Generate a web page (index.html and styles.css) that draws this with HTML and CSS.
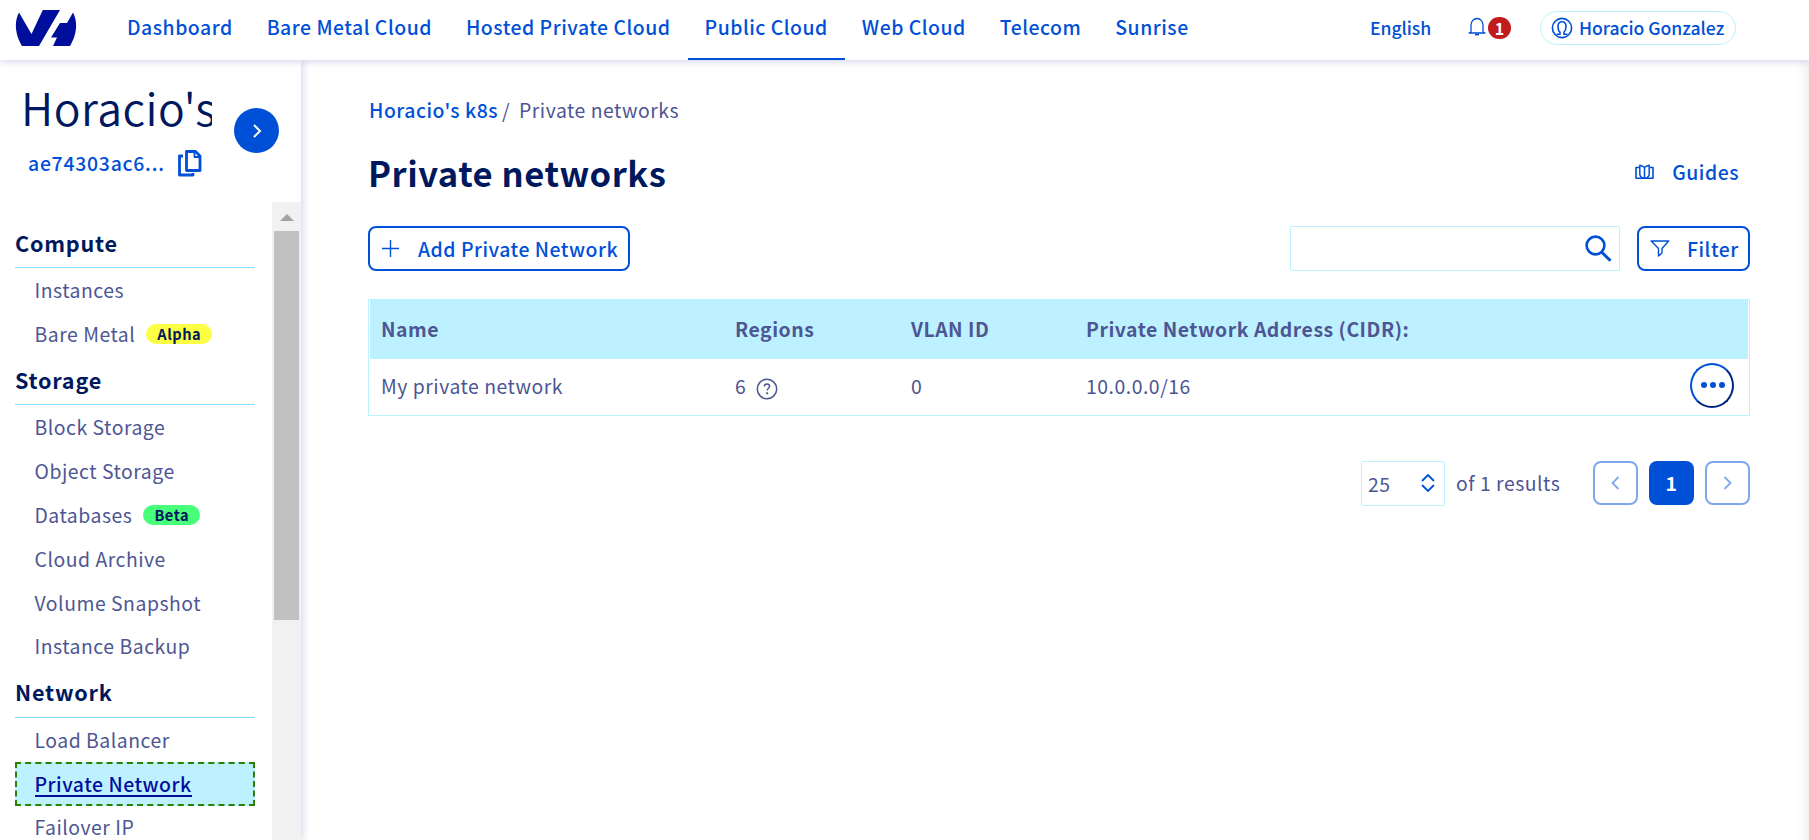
FILE: index.html
```html
<!DOCTYPE html>
<html lang="en">
<head>
<meta charset="utf-8">
<title>Private networks</title>
<link rel="stylesheet" href="styles.css">
</head>
<body>
<header class="topbar">
  <svg class="logo" viewBox="0 0 62 36"><path d="M4 2.5 16.5 24 27.8 0H45L24 36H7C1.500 27 -2 14 4 2.500ZM58 2.500C64 14 60.500 27 55 36H38L42 27.500H36L45 13H52Z" fill="#000e9c"/></svg>
  <nav class="nav">
    <a class="nav-item">Dashboard</a>
    <a class="nav-item">Bare Metal Cloud</a>
    <a class="nav-item">Hosted Private Cloud</a>
    <a class="nav-item active">Public Cloud</a>
    <a class="nav-item">Web Cloud</a>
    <a class="nav-item">Telecom</a>
    <a class="nav-item">Sunrise</a>
  </nav>
  <div class="account">
    <span class="lang">English</span>
    <span class="notif">
      <svg width="18" height="20" viewBox="0 0 18 20" fill="none" stroke="#0050d7" stroke-width="1.300"><path d="M3 15V8a6 6.500 0 0 1 12 0v7l2 1H1z" stroke-linejoin="round"/><path d="M7 17.500h4" stroke-width="1.800"/></svg>
      <b class="count">1</b>
    </span>
    <span class="user">
      <svg width="22" height="22" viewBox="0 0 22 22" fill="none" stroke="#0050d7" stroke-width="1.600"><circle cx="11" cy="11" r="9.600"/><path d="M5.500 17.300H9v-2.200C7.600 14 7 12 7 9.500 7 6.500 8.500 4.800 11 4.800s4 1.700 4 4.700c0 2.500-.6 4.500-2 5.600v2.200h3.500"/></svg>
      <span class="user-name">Horacio Gonzalez</span>
    </span>
  </div>
</header>
<div class="layout">
  <aside class="sidebar">
    <div class="project">
      <div class="project-info">
        <div class="project-name">Horacio's</div>
        <div class="project-id"><span>ae74303ac6...</span>
          <svg width="24" height="27" viewBox="0 0 24 27" fill="none" stroke="#0050d7" stroke-width="2.800" stroke-linejoin="round"><path d="M8.500 1.500h9L22 6v14.500H8.500z"/><path d="M16.500 2v5H22" stroke-width="1.800"/><path d="M5 6H1.500v19H15v-2"/></svg>
        </div>
      </div>
      <span class="switch"><svg width="10" height="14" viewBox="0 0 10 14" fill="none" stroke="#fff" stroke-width="2"><path d="M2 1l6 6-6 6"/></svg></span>
    </div>
    <div class="menu-area">
      <nav class="menu">
        <h2 class="group">Compute</h2>
        <a class="item">Instances</a>
        <a class="item">Bare Metal<b class="tag alpha">Alpha</b></a>
        <h2 class="group">Storage</h2>
        <a class="item">Block Storage</a>
        <a class="item">Object Storage</a>
        <a class="item">Databases<b class="tag beta">Beta</b></a>
        <a class="item">Cloud Archive</a>
        <a class="item">Volume Snapshot</a>
        <a class="item last">Instance Backup</a>
        <h2 class="group raised">Network</h2>
        <a class="item">Load Balancer</a>
        <a class="item current"><span class="current-text">Private Network</span></a>
        <a class="item last">Failover IP</a>
      </nav>
      <div class="track"><svg class="arrow" width="14" height="7" viewBox="0 0 14 7"><path d="M0 7 7 0l7 7z" fill="#a3a3a3"/></svg><div class="thumb"></div></div>
    </div>
  </aside>
  <main class="main">
    <div class="crumbs"><a class="crumb">Horacio's k8s</a><span class="slash">/</span><span class="here">Private networks</span></div>
    <div class="heading">
      <h1 class="title">Private networks</h1>
      <a class="guides"><svg width="19" height="16" viewBox="0 0 19 16" fill="none" stroke="#0050d7" stroke-width="1.600" stroke-linejoin="round"><path d="M4.500 3.500H1V14.300h17V3.500h-3.500"/><path d="M4.800 1.200C7 1.800 8 2.600 9.500 3.300 11 2.600 12 1.800 14.200 1.200V10.500c0 1.800-1.500 2.500-2.500 3.500h-4.400c-1-1-2.500-1.700-2.500-3.500zM9.500 3.500v10" stroke-width="1.500"/></svg><span>Guides</span></a>
    </div>
    <div class="tools">
      <a class="btn add"><svg width="17" height="17" viewBox="0 0 17 17" stroke="#0050d7" stroke-width="1.400"><path d="M8.500 0v17M0 8.500h17"/></svg><span>Add Private Network</span></a>
      <div class="search"><svg width="27" height="27" viewBox="0 0 27 27" fill="none" stroke="#0050d7" stroke-width="2.600"><circle cx="10.500" cy="10.500" r="8.900"/><path d="M16.500 17l9 8.800" stroke-width="3"/></svg></div>
      <a class="btn filter"><svg width="20" height="17" viewBox="0 0 20 17" fill="none" stroke="#0050d7" stroke-width="1.400" stroke-linejoin="round"><path d="M1.200 1h17.500L12 8.500V13l-3.500 3V8.500z"/></svg><span>Filter</span></a>
    </div>
    <div class="table">
      <div class="row head"><span>Name</span><span>Regions</span><span>VLAN ID</span><span>Private Network Address (CIDR):</span></div>
      <div class="row body"><span>My private network</span><span class="regions">6<svg width="22" height="22" viewBox="0 0 22 22" fill="none" stroke="#4d5693" stroke-width="1.500"><circle cx="11" cy="11" r="9.700"/><path d="M8.300 8.500c.1-1.700 1.200-2.500 2.700-2.500s2.600.9 2.600 2.300c0 1.900-2.400 2-2.400 4.200"/><path d="M11.200 14.300v2" stroke-width="1.900"/></svg></span><span>0</span><span>10.0.0.0/16</span>
        <span class="more"><i></i><i></i><i></i></span></div>
    </div>
    <div class="pager">
      <div class="size"><span>25</span><svg width="14" height="18" viewBox="0 0 14 18" fill="none" stroke="#0050d7" stroke-width="1.800"><path d="M1 7l6-6 6 6M1 11l6 6 6-6"/></svg></div>
      <span class="total">of 1 results</span>
      <span class="page off"><svg width="9" height="14" viewBox="0 0 9 14" fill="none" stroke="#80a7eb" stroke-width="1.800"><path d="M7.500 1l-6 6 6 6"/></svg></span>
      <span class="page on">1</span>
      <span class="page off"><svg width="9" height="14" viewBox="0 0 9 14" fill="none" stroke="#80a7eb" stroke-width="1.800"><path d="M1.500 1l6 6-6 6"/></svg></span>
    </div>
  </main>
</div>
</body>
</html>
```
FILE: styles.css
```css
* { box-sizing: border-box; }
body {
  margin: 0; width: 1809px; height: 840px; overflow: hidden; background: #fff;
  font-family: "Noto Sans CJK JP", "Open Sans", sans-serif;
  font-size: 19.4px; line-height: 28px; color: #4d5693; letter-spacing: .52px;
}
svg { display: block; flex: none; }
h1, h2 { margin: 0; }
.topbar {
  position: relative; z-index: 2; display: flex; height: 60px; background: #fff;
  box-shadow: 0 1px 8px rgba(0, 14, 156, .2);
}
.logo { width: 62px; height: 36px; margin: 10px 0 0 15px; }
.nav { display: flex; margin-left: 33px; }
.nav-item { padding: 13px 17px 0; font-weight: 500; color: #0050d7; white-space: nowrap; height: 60px; }
.nav-item.active { border-bottom: 2px solid #0050d7; }
.account { display: flex; margin-left: auto; margin-right: 73px; padding-top: 11px; color: #0050d7; font-weight: 500; font-size: 17.6px; letter-spacing: -.04px; line-height: 34px; }
.lang { width: 98px; line-height: 33px; }
.notif { display: flex; width: 72px; padding-top: 6px; }
.count { width: 23px; height: 22px; margin-left: 2px; border-radius: 11px; background: #c11b1b; color: #fff; font-size: 16px; line-height: 22px; text-align: center; }
.user { display: flex; align-items: center; width: 196px; height: 34px; padding-left: 10px; border: 1px solid #bef1ff; border-radius: 17px; }
.user-name { margin-left: 6px; line-height: 32px; padding-bottom: 1px; white-space: nowrap; }
.layout { display: flex; height: 780px; }
.sidebar { display: flex; flex-direction: column; width: 301px; flex: none; box-shadow: 1px 0 8px rgba(0, 14, 156, .2); }
.project { display: flex; height: 142px; padding-left: 20px; }
.project-info { width: 192px; }
.project-name { height: 64px; margin-top: 15px; padding-left: 1px; overflow: hidden; font-size: 44.500px; line-height: 64px; font-weight: 350; color: #00185e; white-space: nowrap; letter-spacing: .5px; }
.project-id { display: flex; align-items: center; margin-top: 10px; padding-left: 8px; color: #0050d7; font-weight: 500; letter-spacing: .75px; white-space: nowrap; }
.project-id svg { margin-left: 13px; }
.switch { display: flex; align-items: center; justify-content: center; width: 45px; height: 45px; margin: 48px 0 0 22px; border-radius: 50%; background: #0050d7; }
.menu-area { display: flex; height: 638px; overflow: hidden; }
.menu { width: 272px; padding: 17px 17px 0 15px; }
.group { height: 49px; padding-top: 10px; border-bottom: 1px solid #85d9fd; font-size: 21.6px; font-weight: 700; color: #00185e; letter-spacing: .78px; }
.raised { padding-top: 9px; }
.item { display: flex; align-items: center; height: 44px; padding-left: 19.500px; white-space: nowrap; }
.last { padding-bottom: 2px; }
.tag { height: 20px; margin-left: 11px; padding: 0 11px; border-radius: 10px; color: #00185e; font-size: 14.6px; line-height: 20px; }
.alpha { background: #fcff44; }
.beta { background: #47ff79; }
.current { padding: 1px 0 0 17.500px; border: 2px dashed #2b8000; background: #bef1ff; color: #000e9c; font-weight: 500; }
.current-text { border-bottom: 2px solid #000e9c; line-height: 23px; }
.track { width: 29px; background: #f1f1f1; }
.arrow { margin: 12px 0 0 8px; }
.thumb { width: 25px; height: 389px; margin: 10px 0 0 2px; background: #c1c1c1; }
.main { flex: 1; padding: 36px 59px 0 67px; box-shadow: inset -12px 0 14px -12px rgba(0, 0, 0, .12); }
.crumbs { display: flex; }
.crumb { width: 133px; font-weight: 500; color: #0050d7; margin-left: 1px; white-space: nowrap; }
.slash { width: 17px; }
.heading { display: flex; justify-content: space-between; height: 102px; }
.title { margin-top: 25px; font-size: 34.600px; line-height: 46px; font-weight: 700; color: #00185e; }
.guides { display: flex; align-items: center; height: 28px; margin: 34px 11px 0 0; font-weight: 500; color: #0050d7; }
.guides svg { margin-right: 18px; }
.tools { display: flex; }
.btn { display: flex; align-items: center; height: 45px; padding-left: 13px; border: 2px solid #0050d7; border-radius: 8px; font-weight: 500; color: #0050d7; white-space: nowrap; }
.add { width: 262px; padding-left: 12px; }
.add svg { margin-right: 19px; }
.search { display: flex; width: 330px; height: 45px; margin-left: auto; padding: 8px 0 0 294px; border: 1px solid #bef1ff; border-radius: 2px; }
.filter { width: 113px; margin-left: 17px; padding-left: 11px; }
.filter svg { margin-right: 17px; }
.table { height: 117px; margin-top: 28px; border: 1px solid #bef1ff; padding: 0 1px; }
.row { position: relative; display: grid; grid-template-columns: 354px 176px 175px 1fr; align-items: center; padding: 0 0 2px 11px; }
.head { height: 59px; background: #bef1ff; font-weight: 700; }
.body { height: 56px; }
.regions { display: flex; align-items: center; }
.regions svg { margin: 5px 0 0 10px; }
.more { position: absolute; right: 14px; top: 4px; display: flex; align-items: center; justify-content: center; gap: 3px; width: 44px; height: 45px; padding: 0 0 1px 1px; border: 2px solid #0050d7; border-right-color: #00267f; border-bottom-color: #00267f; border-radius: 50%; }
.more i { width: 6px; height: 6px; border-radius: 50%; background: #0050d7; }
.pager { display: flex; justify-content: flex-end; margin-top: 45px; }
.size { display: flex; align-items: center; justify-content: space-between; width: 84px; height: 45px; padding: 0 9px 0 6px; border: 1px solid #bef1ff; border-radius: 2px; }
.size svg { margin-bottom: 1px; }
.total { width: 137px; margin: 8px 0 0 11px; white-space: nowrap; }
.page { display: flex; align-items: center; justify-content: center; width: 45px; height: 44px; border-radius: 8px; font-weight: 700; }
.page + .page { margin-left: 11px; }
.off { border: 2px solid #80a7eb; }
.on { background: #0050d7; color: #fff; }
```
